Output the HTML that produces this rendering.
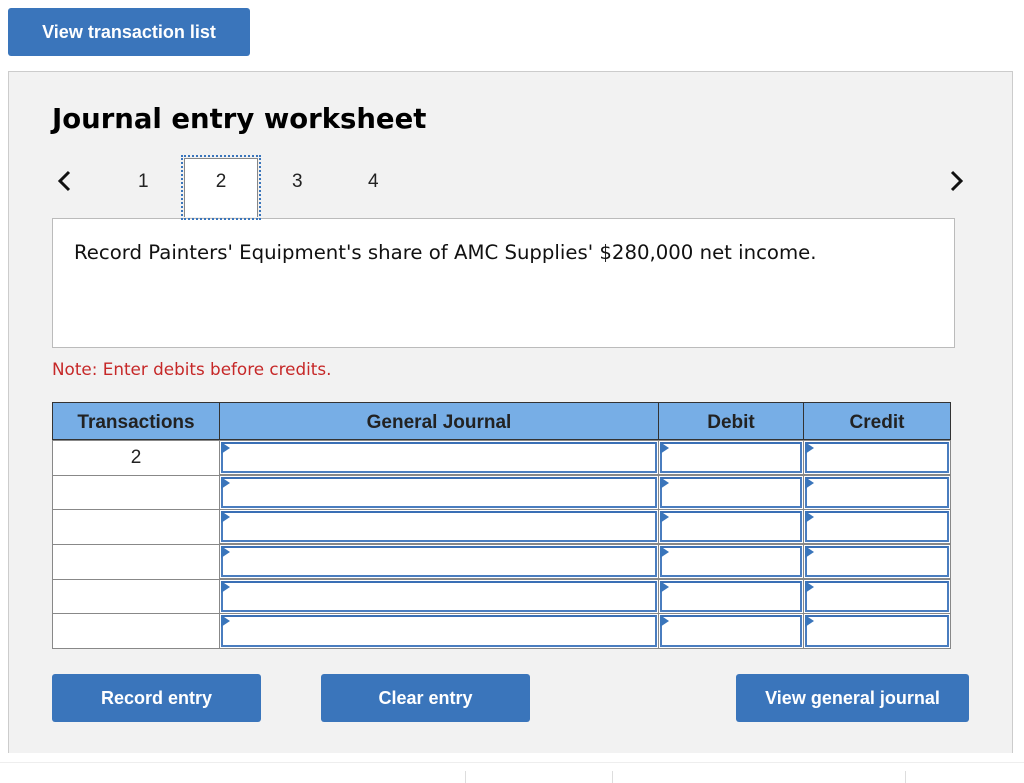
<!DOCTYPE html>
<html><head><style>
body{margin:0;width:1024px;height:783px;background:#fff;position:relative;overflow:hidden;font-family:"Liberation Sans",Arial,sans-serif;}
.a{position:absolute;}
.btn{position:absolute;background:#3a75bb;color:#fff;font-weight:bold;font-size:18px;text-align:center;border-radius:3px;}
.panel{left:8px;top:71px;width:1005px;height:682px;background:#f2f2f2;border:1px solid #ccc;border-bottom:none;box-sizing:border-box;}
.th{position:absolute;top:402px;height:38px;background:#77aee6;border:1px solid #333;box-sizing:border-box;font-weight:bold;font-size:19px;color:#222;text-align:center;line-height:39px;}
.tc{position:absolute;left:52px;width:168px;height:36px;background:#fff;border:1px solid #888;box-sizing:border-box;font-size:19px;text-align:center;line-height:34px;color:#222;}
.in{position:absolute;height:35px;background:#fff;border:1px solid #888;box-sizing:border-box;}
.in div{position:absolute;left:1px;top:1px;right:1px;bottom:1px;border:2px solid #4a7dbf;border-top-color:#3a6fb5;}
.in div:after{content:"";position:absolute;left:-2px;top:-2px;border-left:9px solid #3a75bb;border-top:6px solid transparent;border-bottom:6px solid transparent;}
</style></head><body>
<div class="btn" style="left:8px;top:8px;width:242px;height:48px;line-height:48px;">View transaction list</div>
<div class="a panel"></div>
<div class="a" style="left:52px;top:103px;font-family:'DejaVu Sans',Verdana,sans-serif;font-weight:bold;font-size:27.5px;color:#000;">Journal entry worksheet</div>
<svg class="a" style="left:56px;top:170px" width="16" height="22"><path d="M13 2 L4 11 L13 20" stroke="#111" stroke-width="3" fill="none"/></svg>
<svg class="a" style="left:949px;top:170px" width="16" height="22"><path d="M3 2 L12 11 L3 20" stroke="#111" stroke-width="3" fill="none"/></svg>
<div class="a" style="left:138px;top:171px;font-size:19px;color:#222;">1</div>
<div class="a" style="left:52px;top:218px;width:903px;height:130px;background:#fff;border:1px solid #bbb;box-sizing:border-box;"></div>
<div class="a" style="left:181px;top:155px;width:80px;height:65px;border:2px dotted #3a75bb;box-sizing:border-box;"></div>
<div class="a" style="left:184px;top:158px;width:74px;height:59px;background:#fff;border:1px solid #888;border-bottom:none;box-sizing:border-box;text-align:center;font-size:19px;line-height:46px;color:#222;">2</div>
<div class="a" style="left:292px;top:171px;font-size:19px;color:#222;">3</div>
<div class="a" style="left:368px;top:171px;font-size:19px;color:#222;">4</div>
<div class="a" style="left:74px;top:241px;font-family:'DejaVu Sans',Verdana,sans-serif;font-size:19.7px;color:#111;white-space:nowrap;">Record Painters' Equipment's share of AMC Supplies' $280,000 net income.</div>
<div class="a" style="left:52px;top:359px;font-family:'DejaVu Sans',Verdana,sans-serif;font-size:16.8px;color:#c62828;white-space:nowrap;">Note: Enter debits before credits.</div>
<div class="th" style="left:52px;width:168px;">Transactions</div>
<div class="th" style="left:219px;width:440px;">General Journal</div>
<div class="th" style="left:658px;width:146px;">Debit</div>
<div class="th" style="left:803px;width:148px;">Credit</div>
<div class="tc" style="top:440px;">2</div>
<div class="tc" style="top:475px;"></div>
<div class="tc" style="top:509px;"></div>
<div class="tc" style="top:544px;"></div>
<div class="tc" style="top:579px;"></div>
<div class="tc" style="top:613px;"></div>
<div class="in" style="left:219px;top:440px;width:440px"><div></div></div><div class="in" style="left:658px;top:440px;width:146px"><div></div></div><div class="in" style="left:803px;top:440px;width:148px"><div></div></div>
<div class="in" style="left:219px;top:475px;width:440px"><div></div></div><div class="in" style="left:658px;top:475px;width:146px"><div></div></div><div class="in" style="left:803px;top:475px;width:148px"><div></div></div>
<div class="in" style="left:219px;top:509px;width:440px"><div></div></div><div class="in" style="left:658px;top:509px;width:146px"><div></div></div><div class="in" style="left:803px;top:509px;width:148px"><div></div></div>
<div class="in" style="left:219px;top:544px;width:440px"><div></div></div><div class="in" style="left:658px;top:544px;width:146px"><div></div></div><div class="in" style="left:803px;top:544px;width:148px"><div></div></div>
<div class="in" style="left:219px;top:579px;width:440px"><div></div></div><div class="in" style="left:658px;top:579px;width:146px"><div></div></div><div class="in" style="left:803px;top:579px;width:148px"><div></div></div>
<div class="in" style="left:219px;top:613px;width:440px;height:36px"><div></div></div><div class="in" style="left:658px;top:613px;width:146px;height:36px"><div></div></div><div class="in" style="left:803px;top:613px;width:148px;height:36px"><div></div></div>
<div class="btn" style="left:52px;top:674px;width:209px;height:48px;line-height:48px;">Record entry</div>
<div class="btn" style="left:321px;top:674px;width:209px;height:48px;line-height:48px;">Clear entry</div>
<div class="btn" style="left:736px;top:674px;width:233px;height:48px;line-height:48px;">View general journal</div>
<div class="a" style="left:0;top:762px;width:1024px;height:1px;background:#eee;"></div>
<div class="a" style="left:465px;top:771px;width:1px;height:12px;background:#ddd;"></div>
<div class="a" style="left:612px;top:771px;width:1px;height:12px;background:#ddd;"></div>
<div class="a" style="left:905px;top:771px;width:1px;height:12px;background:#ddd;"></div>
</body></html>
